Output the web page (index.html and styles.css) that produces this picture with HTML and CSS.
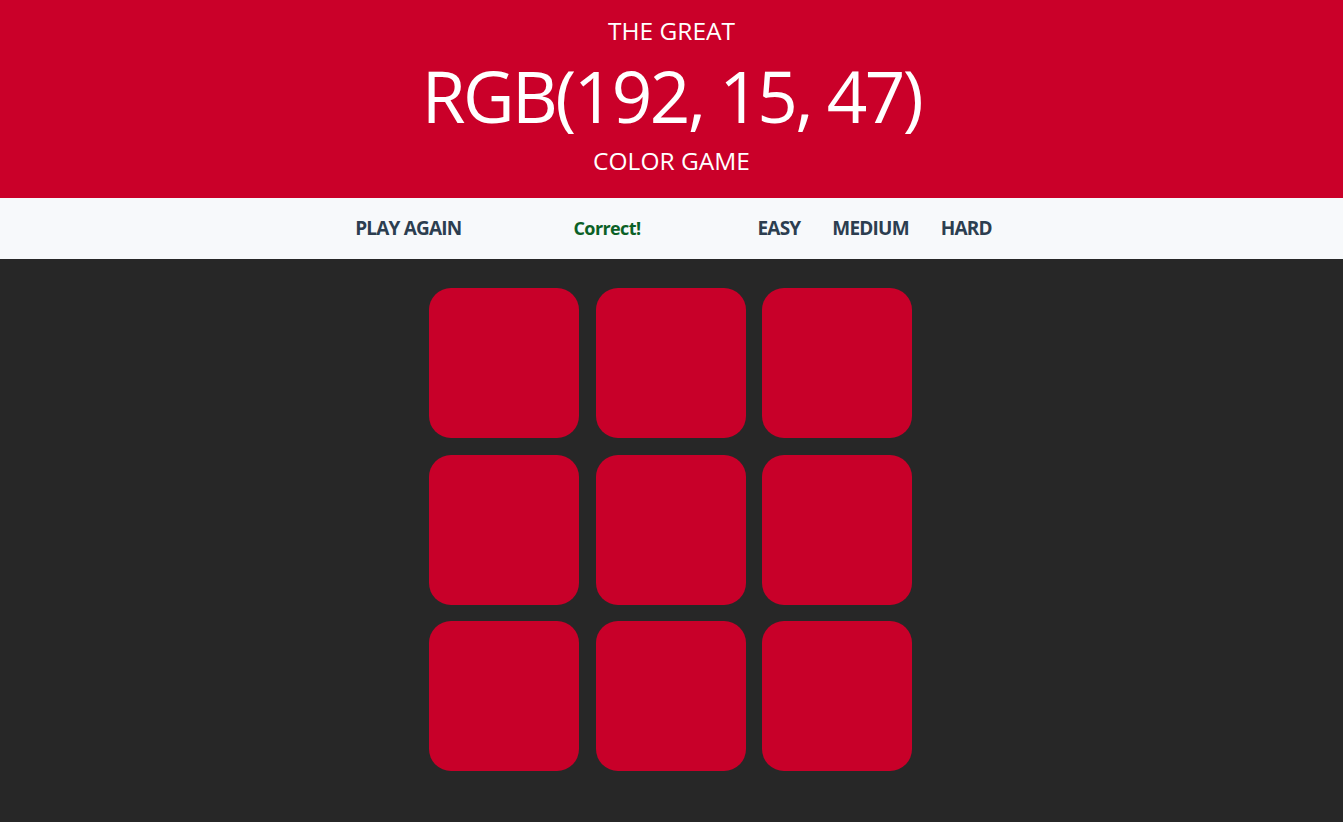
FILE: index.html
```html
<!DOCTYPE html>
<html lang="en">
<head>
<meta charset="utf-8">
<title>The Great RGB Color Game</title>
<link rel="stylesheet" href="styles.css">
</head>
<body>
<header class="hero">
  <div class="hero-line">THE GREAT</div>
  <div class="hero-rgb">RGB(192, 15, 47)</div>
  <div class="hero-line">COLOR GAME</div>
</header>
<nav class="bar">
  <div class="bar-inner">
    <button class="bar-btn reset">PLAY AGAIN</button>
    <span class="message">Correct!</span>
    <div class="modes">
      <button class="bar-btn">EASY</button>
      <button class="bar-btn">MEDIUM</button>
      <button class="bar-btn">HARD</button>
    </div>
  </div>
</nav>
<main class="board">
  <div class="grid">
    <div class="square"></div>
    <div class="square"></div>
    <div class="square"></div>
    <div class="square"></div>
    <div class="square"></div>
    <div class="square"></div>
    <div class="square"></div>
    <div class="square"></div>
    <div class="square"></div>
  </div>
</main>
</body>
</html>
```
FILE: styles.css
```css
html, body {
  margin: 0;
  padding: 0;
  height: 100%;
}
body {
  background: #272727;
  font-family: "Open Sans", "Noto Sans", sans-serif;
}
.hero {
  background: #ca0029;
  color: #ffffff;
  text-align: center;
  height: 198px;
  box-sizing: border-box;
  padding-top: 14px;
}
.hero-line {
  font-size: 24.5px;
  line-height: 34px;
}
.hero-rgb {
  font-size: 71px;
  line-height: 96px;
  letter-spacing: -2.6px;
}
.bar {
  background: #f7f9fb;
  height: 61px;
  display: flex;
  align-items: center;
  justify-content: center;
}
.bar-inner {
  display: flex;
  align-items: center;
  margin-left: 4px;
  margin-top: -2px;
}
.bar-btn {
  background: none;
  border: 0;
  padding: 0;
  font-family: "Open Sans", sans-serif;
  font-weight: 700;
  font-size: 19px;
  letter-spacing: -0.8px;
  color: #2c3e50;
}
.message {
  font-weight: 700;
  font-size: 18px;
  letter-spacing: -0.6px;
  color: #0b6126;
  margin-left: 112px;
  margin-right: 117px;
}
.modes {
  display: flex;
  gap: 32px;
}
.board {
  display: flex;
  justify-content: center;
  padding-top: 29px;
}
.grid {
  display: grid;
  grid-template-columns: repeat(3, 150px);
  grid-auto-rows: 150px;
  column-gap: 16.5px;
  row-gap: 16.5px;
  margin-right: 2px;
}
.square {
  background: #c80029;
  border-radius: 22px;
}
```
